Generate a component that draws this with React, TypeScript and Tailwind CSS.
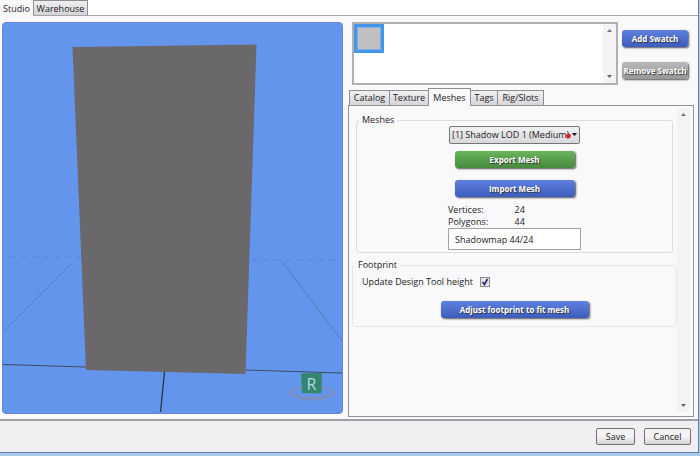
import { useState, type ReactNode } from "react";
import clsx from "clsx";

function GlossButton({
  tone = "blue",
  className,
  children,
}: {
  tone?: "blue" | "green" | "gray";
  className?: string;
  children: ReactNode;
}) {
  return (
    <button
      type="button"
      className={clsx(
        "h-[17px] rounded-[3px] text-center text-[8px] leading-[17px] font-bold whitespace-nowrap text-white shadow-[1px_1px_2px_#555] [text-shadow:1px_1px_1px_#333]",
        tone === "blue" && "bg-linear-to-b from-[#5f80df] to-[#3c5dbb]",
        tone === "green" && "bg-linear-to-b from-[#6ab55b] to-[#478a3f]",
        tone === "gray" && "bg-linear-to-b from-[#b9b9b9] to-[#989898]",
        className,
      )}
    >
      {children}
    </button>
  );
}

function DialogButton({ className, children }: { className: string; children: ReactNode }) {
  return (
    <button
      type="button"
      className={clsx(
        "h-[17px] rounded-[2px] border border-[#707070] bg-linear-to-b from-[#f4f3f5] from-50% to-[#d3d2d4] text-[9px] leading-[15px]",
        className,
      )}
    >
      {children}
    </button>
  );
}

function ScrollTrack({ className }: { className?: string }) {
  return (
    <div className={clsx("flex w-[13px] flex-col items-center justify-between bg-[#f4f2f5] py-[5px]", className)}>
      <svg width="5" height="3" viewBox="0 0 5 3" aria-hidden="true">
        <path d="M0 3 2.5 0 5 3Z" fill="#77757b" />
      </svg>
      <svg width="5" height="3" viewBox="0 0 5 3" aria-hidden="true">
        <path d="M0 0 2.5 3 5 0Z" fill="#66646a" />
      </svg>
    </div>
  );
}

function Viewport() {
  return (
    <div className="flex min-w-0 flex-1 overflow-hidden rounded-[4px] border border-[#6684d8] bg-[#6495ed]">
      <svg className="h-full w-full" viewBox="3 23 339 390" preserveAspectRatio="none" role="img" aria-label="Mesh preview">
        <g fill="none" stroke="#4467a8" strokeWidth="0.6">
          <path d="M10 257H82M252 260H340" strokeDasharray="6 5" opacity="0.5" />
          <path d="M8 293H84M248 298H340" strokeDasharray="5 9" opacity="0.2" />
          <path d="M71 264 4 331M281 260 342 341" stroke="#47566f" strokeWidth="0.6" opacity="0.7" />
        </g>
        <path d="M3 364.5 86 367M245 370 342 373" fill="none" stroke="#3d434f" strokeWidth="0.9" />
        <path d="M164.500 372 160.500 412" fill="none" stroke="#2f3440" strokeWidth="1.300" />
        <path d="M72.500 47 256.500 44.500 245.500 374 86 370Z" fill="#6a686a" />
        <path
          fillRule="evenodd"
          d="M289 393a23 7.500 0 1 0 46 0a23 7.500 0 1 0 -46 0ZM293 392a19 4.500 0 1 0 38 0a19 4.500 0 1 0 -38 0Z"
          fill="#788fc6"
        />
        <path d="M301 373.500 322 373 321.500 393.500 302 393Z" fill="#34866e" />
        <text x="311.500" y="389.500" textAnchor="middle" fontSize="16" fill="#a9dce0">
          R
        </text>
      </svg>
    </div>
  );
}

function SwatchPanel() {
  return (
    <div className="flex items-start gap-1 pl-1">
      <div className="flex h-[63px] min-w-0 flex-1 border-2 border-[#b0b0b2] bg-white">
        <div className="flex-1">
          <button
            type="button"
            aria-label="Gray swatch"
            className="block h-[29px] w-[30px] border-[3px] border-[#4296e5] bg-[#c1bfc1] outline-1 -outline-offset-4 outline-[#7db2e5]"
          />
        </div>
        <ScrollTrack />
      </div>
      <div className="flex w-[72px] flex-col items-start gap-[15px] pt-2">
        <GlossButton className="w-[66px]">Add Swatch</GlossButton>
        <GlossButton tone="gray" className="w-[66px]">
          Remove Swatch
        </GlossButton>
      </div>
    </div>
  );
}

const tabs = [
  { name: "Catalog", width: "w-[41px]" },
  { name: "Texture", width: "w-[40px]" },
  { name: "Meshes", width: "w-[43px]" },
  { name: "Tags", width: "w-[28px]" },
  { name: "Rig/Slots", width: "w-[47px]" },
];

function MeshesGroup() {
  return (
    <fieldset className="mr-1 ml-1 flex flex-col items-center rounded-[3px] border border-[#dddce1] pb-[2px]">
      <legend className="ml-[2px] px-[3px] leading-3">Meshes</legend>
      <div className="relative">
        <select
          aria-label="Level of detail"
          className="block h-[18px] w-[131px] appearance-none rounded-[2px] border border-[#77757a] bg-linear-to-b from-[#f2f1f3] to-[#d8d7da] pl-[2px] leading-4"
        >
          <option>[1] Shadow LOD 1 (Medium)</option>
        </select>
        <svg className="pointer-events-none absolute top-[5px] right-[3px] h-2 w-3" viewBox="0 0 12 8" aria-hidden="true">
          <circle cx="3.500" cy="5" r="2.400" fill="#df2029" />
          <path d="M7 2h5L9.500 5Z" fill="#111" />
        </svg>
      </div>
      <GlossButton tone="green" className="mt-[7px] w-[120px]">
        Export Mesh
      </GlossButton>
      <GlossButton className="mt-3 w-[120px]">Import Mesh</GlossButton>
      <dl className="mt-[7px] grid w-[133px] grid-cols-2 leading-3">
        <dt>Vertices:</dt>
        <dd>24</dd>
        <dt>Polygons:</dt>
        <dd>44</dd>
      </dl>
      <input
        aria-label="Mesh name"
        defaultValue="Shadowmap 44/24"
        className="h-[22px] w-[133px] border border-[#a3a2a6] bg-white px-[6px]"
      />
    </fieldset>
  );
}

function FootprintGroup() {
  return (
    <fieldset className="mt-[6px] flex flex-col rounded-[3px] border border-[#e6e5ea] pb-2">
      <legend className="ml-[2px] px-[3px] leading-3">Footprint</legend>
      <div className="flex h-[22px] items-center pl-[9px]">
        <label htmlFor="height" className="w-[118px]">
          Update Design Tool height
        </label>
        <span className="grid size-[10px]">
          <input
            id="height"
            type="checkbox"
            defaultChecked
            className="peer col-start-1 row-start-1 size-[10px] appearance-none border border-[#8d8c92] bg-[#e3e4ea]"
          />
          <svg
            className="pointer-events-none invisible col-start-1 row-start-1 size-[10px] peer-checked:visible"
            viewBox="0 0 10 10"
            aria-hidden="true"
          >
            <path d="M2.500 5 4.500 7.500 7.500 2" fill="none" stroke="#252a66" strokeWidth="1.700" />
          </svg>
        </span>
      </div>
      <GlossButton className="mt-2 w-[148px] self-center">Adjust footprint to fit mesh</GlossButton>
    </fieldset>
  );
}

export default function App() {
  const [active, setActive] = useState("Meshes");
  return (
    <div className="flex h-screen flex-col bg-[#a9caea] font-['Open_Sans','Noto_Sans',sans-serif] text-[9px] text-[#1c1b1e]">
      <div className="mr-px mb-[3px] flex min-h-0 flex-1 flex-col border-r border-b border-[#6280a8] bg-[#f9f8fb]">
        <nav className="flex h-4 border-b border-[#a3a4a5] bg-white leading-[15px]">
          <button type="button" className="-mb-px w-[33px] bg-[#f9f8fb] text-center">
            Studio
          </button>
          <button
            type="button"
            className="w-[55px] border border-b-0 border-[#8e8d91] bg-linear-to-b from-[#efeef0] to-[#d5d4d7] text-center"
          >
            Warehouse
          </button>
        </nav>

        <main className="flex min-h-0 flex-1 gap-[5px] border-b-2 border-[#a09fa3] pt-[6px] pr-1 pb-[2px] pl-[2px]">
          <div className="flex min-w-0 flex-1 pb-[3px]">
            <Viewport />
          </div>
          <div className="flex w-[346px] flex-col">
            <SwatchPanel />
            <div role="tablist" className="mt-1 flex h-4 items-end pl-[2px]">
              {tabs.map((tab) => (
                <button
                  key={tab.name}
                  type="button"
                  role="tab"
                  aria-selected={active === tab.name}
                  onClick={() => setActive(tab.name)}
                  className={clsx(
                    "-ml-px border border-b-0 text-center",
                    tab.width,
                    active === tab.name
                      ? "z-10 -mb-px h-[18px] border-[#8e8d91] bg-[#f9f8fb] leading-4"
                      : "h-[15px] border-[#8e8d91] bg-linear-to-b from-[#f0eff1] to-[#d6d5d8] leading-[14px]",
                  )}
                >
                  {tab.name}
                </button>
              ))}
            </div>
            <div className="flex min-h-0 flex-1 border border-[#929196] pr-[3px]">
              <div className="min-w-0 flex-1 pt-2 pl-[3px]">
                <MeshesGroup />
                <FootprintGroup />
              </div>
              <ScrollTrack className="mt-[2px] mb-1" />
            </div>
          </div>
        </main>

        <footer className="flex h-[31px] items-center justify-end gap-[9px] bg-[#f0eef1] pr-[7px]">
          <DialogButton className="w-[39px]">Save</DialogButton>
          <DialogButton className="w-[47px]">Cancel</DialogButton>
        </footer>
      </div>
    </div>
  );
}
